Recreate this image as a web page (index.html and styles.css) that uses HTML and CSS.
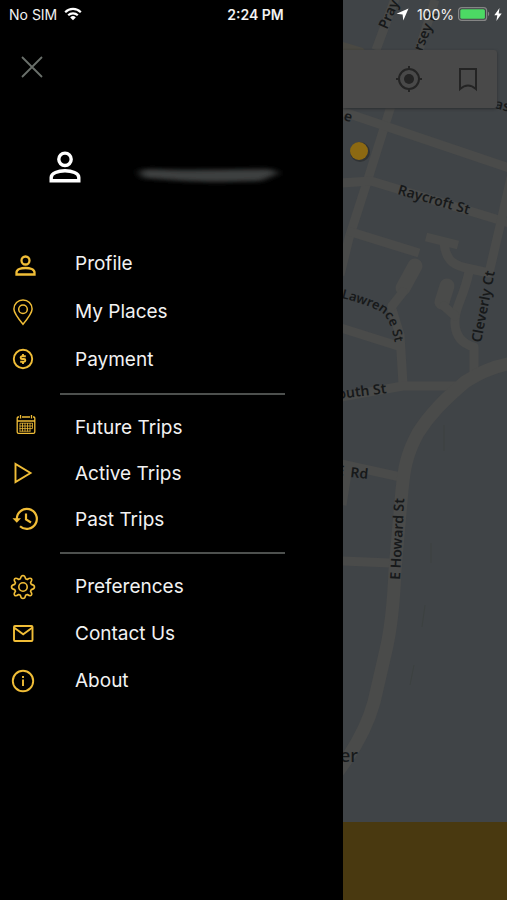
FILE: index.html
```html
<!DOCTYPE html>
<html lang="en">
<head>
<meta charset="utf-8">
<meta name="viewport" content="width=device-width, initial-scale=1">
<title>Trips menu</title>
<link rel="stylesheet" href="styles.css">
</head>
<body>
<div class="screen">
  <header class="status">
    <div class="status-side">
      <span>No SIM</span>
      <svg class="wifi" width="18" height="14" viewBox="0 0 18 14" aria-hidden="true">
        <g fill="none" stroke="#fff" stroke-width="2.2"><path d="M1.2 5.2a11 11 0 0 1 15.6 0"/><path d="M4.2 8.3a6.8 6.8 0 0 1 9.6 0"/></g>
        <path d="M9 13.2 6.2 10.4a4 4 0 0 1 5.6 0z" fill="#fff"/>
      </svg>
    </div>
    <strong class="time">2:24 PM</strong>
    <div class="status-side status-right">
      <svg width="13" height="13" viewBox="0 0 13 13" aria-hidden="true"><path d="M12.5.5 7.3 12.4 6.6 6.5.5 5.8z" fill="#fff"/></svg>
      <span>100%</span>
      <svg class="battery" width="32" height="14" viewBox="0 0 32 14" aria-hidden="true">
        <rect x=".6" y=".6" width="28" height="12.8" rx="3" fill="none" stroke="#858585" stroke-width="1.2"/>
        <rect x="2.3" y="2.3" width="24.6" height="9.4" rx="1.5" fill="#4cd964"/>
        <path d="M30 4.8v4.4c1.6-.4 1.6-4 0-4.4z" fill="#858585"/>
      </svg>
      <svg width="8" height="13" viewBox="0 0 8 13" aria-hidden="true"><path d="M5.5 0 .3 7.3h3L2.4 13l5.3-7.6h-3z" fill="#fff"/></svg>
    </div>
  </header>

  <aside class="drawer">
    <button class="close" type="button" aria-label="Close menu">
      <svg width="22" height="22" viewBox="0 0 22 22"><path d="M1 1l20 20M21 1 1 21" stroke="#6a706b" stroke-width="1.8"/></svg>
    </button>
    <div class="account">
      <svg width="32" height="32" viewBox="0 0 32 32" fill="none" stroke="#fff" stroke-width="3.4" aria-hidden="true">
        <circle cx="16" cy="8.3" r="6.2"/>
        <path d="M2.200 29.800V26.500C2.200 17.500 29.800 17.500 29.800 26.500V29.800z"/>
      </svg>
      <svg class="smudge" width="160" height="40" viewBox="0 0 160 40" aria-hidden="true">
        <defs><filter id="soft" x="-10%" y="-80%" width="120%" height="260%"><feGaussianBlur stdDeviation="4 2"/></filter></defs>
        <path d="M14 24 22 22 60 23 145 22 154 26 136 34 90 35 60 34 18 31z" fill="#3e3f3f" filter="url(#soft)"/>
      </svg>
    </div>

    <nav>
      <ul class="group group-account">
        <li><a href="#profile">
          <svg class="icon" viewBox="0 0 32 32" stroke-width="2.300"><circle cx="17.5" cy="13.500" r="4"/><path d="M8.500 27.500V25.500C8.500 19.500 26.500 19.500 26.500 25.500V27.500z"/></svg>Profile</a></li>
        <li><a href="#places">
          <svg class="icon" viewBox="0 0 32 32" stroke-width="1.5"><path d="M15 29.300C9 22 5.900 18 5.900 14a9.100 9.100 0 0 1 18.200 0C24.100 18 21 22 15 29.300z"/><circle cx="15" cy="14.200" r="4.300"/></svg>My Places</a></li>
        <li><a href="#payment">
          <svg class="icon" viewBox="0 0 32 32" stroke-width="1.900"><circle cx="15" cy="16" r="9.200"/><path d="M17.800 13.300H14a1.350 1.350 0 0 0 0 2.700h2a1.350 1.350 0 0 1 0 2.700h-3.800M15 11v2.300M15 18.700V21"/></svg>Payment</a></li>
      </ul>
      <hr>
      <ul class="group group-trips">
        <li><a href="#future">
          <svg class="icon" viewBox="0 0 32 32" stroke-width="1.300"><path d="M11 6H10.200Q9.200 6 9.200 7V21Q9.200 22.400 10.600 22.400H25.400Q26.800 22.400 26.800 21V7Q26.800 6 25.800 6H25M14 6h8M9.200 10h17.600M12.500 4v3.500M23.500 4v3.500"/><path stroke-width=".8" d="M12 12.200h12.500M11.500 15h13M11.500 17.600h13M11.500 20.200h11M12 12v8.500M14.500 12v8.500M17 12v8.500M19.500 12v8.500M22 12v8.500M24.500 12v5.600"/></svg>Future Trips</a></li>
        <li><a href="#active">
          <svg class="icon" viewBox="0 0 32 32" stroke-width="1.900"><path d="M7.500 7V25L22.500 16z"/></svg>Active Trips</a></li>
        <li><a href="#past">
          <svg class="icon" viewBox="0 0 32 32" stroke-width="2.200"><path d="M8.800 16A10 10 0 1 1 12 23.200M18 10.500V16.500L23 19.500"/><path d="M4.500 15.300H13L8.800 19.800z" fill="#f0bd37" stroke="none"/></svg>Past Trips</a></li>
      </ul>
      <hr>
      <ul class="group">
        <li><a href="#preferences">
          <svg class="icon" viewBox="0 0 32 32" stroke-width="1.600" stroke-linejoin="round"><g transform="translate(15 16)"><circle r="4.200"/><path d="M-2.600-8.300Q-2-11.500 0-11.500T2.600-8.300L4.300-7.500Q7-9.500 8.300-8.300T7.500-4.300L8.300-2.600Q11.500-2 11.500 0T8.300 2.600L7.500 4.300Q9.500 7 8.300 8.300T4.300 7.500L2.600 8.300Q2 11.500 0 11.500T-2.600 8.300L-4.300 7.500Q-7 9.500-8.300 8.300T-7.500 4.300L-8.300 2.600Q-11.500 2-11.500 0T-8.300-2.600L-7.500-4.300Q-9.500-7-8.300-8.300T-4.300-7.500z"/></g></svg>Preferences</a></li>
        <li><a href="#contact">
          <svg class="icon" viewBox="0 0 32 32" stroke-width="1.900"><rect x="6" y="8" width="18.500" height="15" rx="1"/><path d="M6 9.500 15.200 16.300 24.500 9.500"/></svg>Contact Us</a></li>
        <li><a href="#about">
          <svg class="icon" viewBox="0 0 32 32" stroke-width="1.900"><circle cx="15" cy="16" r="10.200"/><path d="M15 14.500V21M15 11v2"/></svg>About</a></li>
      </ul>
    </nav>
  </aside>

  <main class="map-pane">
    <svg class="map" viewBox="0 0 164 822" preserveAspectRatio="xMinYMin slice" role="img" aria-label="Street map">
      <rect width="164" height="822" fill="#404447"/>
      <path d="M0 42 20 48 30 60H0z" fill="#4a4943"/>
      <g fill="none" stroke="#4a4b4a" stroke-width="9" stroke-linejoin="round">
        <path d="M53-4 33 50M92 0 76 50M48 106 24 182 6 238-3 275"/>
        <path d="M-2 111 45 127 166 168M-2 183 28 181 166 223M5 231 76 253"/>
        <path d="M172 160 157 226 146 273 128 269C112 266 103 262 101 243M83 237 115 245M126 272C120 300 111 308 112 324Q113 342 131 347L131 375"/>
        <path d="M-2 328 55 346M48 306 57 335 60 384"/>
        <path d="M-2 397 60 386H116M-2 464 62 478M5 467-1 505M-2 561 47 563"/>
      </g>
      <g fill="none" stroke="#4a4b4a" stroke-linecap="round" stroke-linejoin="round">
        <path stroke-width="15" d="M72 266 60 288"/><path stroke-width="9" d="M60 292 49 306"/>
        <path stroke-width="15" d="M104 286 99 302"/><path stroke-width="9" d="M101 306 112 316"/>
        <path stroke-width="13" d="M170 363C148 367 136 373 122 382 101 400 87 414 75 433 63 455 61 470 59 490L52 570Q50 620 43 650L31 702Q22 735-4 770"/>
      </g>
      <g fill="none" stroke="#3c4140"><path d="M101 425v26M88 543v20M82 605l-3 22M71 665l-4 20"/></g>
      <g class="street">
        <text transform="translate(44 30) rotate(-66)">Pray</text>
        <text transform="translate(79 52) rotate(-68)">rsey R</text>
        <text transform="translate(0 120) rotate(15)">e</text>
        <text transform="translate(151 108) rotate(15)">as</text>
        <text transform="translate(54 194) rotate(16)">Raycroft St</text>
        <path id="lawrence" d="M-2 298Q20 303 36 311 49 317 54 356" fill="none"/>
        <text class="curved"><textPath href="#lawrence">Lawrence St</textPath></text>
        <text transform="translate(138 343) rotate(-79)">Cleverly Ct</text>
        <text transform="translate(-5 399) rotate(-7)">outh St</text>
        <text transform="translate(-7 475) rotate(6)">E</text>
        <text transform="translate(7 477) rotate(6)">Rd</text>
        <text transform="translate(57 580) rotate(-87)">E Howard St</text>
        <text class="town" x="-3" y="762">er</text>
      </g>
      <circle cx="17" cy="152" r="10" fill="#303335"/>
      <circle cx="16" cy="151" r="9" fill="#8c6912"/>
    </svg>
    <div class="toolbar">
      <button type="button" aria-label="Current location">
        <svg width="28" height="28" viewBox="0 0 28 28" fill="none" stroke="#242424" stroke-width="2"><circle cx="14" cy="14" r="10"/><circle cx="14" cy="14" r="5" fill="#242424" stroke="none"/><path d="M14 1v4M14 23v4M1 14h4M23 14h4"/></svg>
      </button>
      <button type="button" aria-label="Saved places">
        <svg width="28" height="28" viewBox="0 0 28 28" fill="none" stroke="#242424" stroke-width="2"><path d="M6 4H22V24Q14 17 6 24z"/></svg>
      </button>
    </div>
    <div class="action-bar"></div>
  </main>
</div>
</body>
</html>
```
FILE: styles.css
```css
* {
  box-sizing: border-box;
}

body {
  margin: 0;
  background: #000;
  color: #f2f2f2;
  font-family: Inter, "Liberation Sans", sans-serif;
}

button {
  padding: 0;
  border: 0;
  background: none;
}

svg {
  display: block;
}

.screen {
  position: relative;
  display: grid;
  grid-template-columns: 343fr 164fr;
  min-height: 100vh;
}

/* Status bar lies over both the drawer and the map */
.status {
  position: absolute;
  inset: 0 0 auto;
  z-index: 2;
  display: grid;
  grid-template-columns: 1fr auto 1fr;
  align-items: center;
  height: 28px;
  padding: 0 5px 0 9px;
  font-size: 14px;
}

.status-side {
  display: flex;
  align-items: center;
  gap: 7px;
}

.status-right {
  justify-content: flex-end;
  gap: 4px;
}

.status-right span {
  margin-left: 4px;
}

.time {
  font-weight: 600;
}

.drawer {
  background: #000;
  padding-top: 56px;
}

.close {
  display: block;
  margin-left: 21px;
}

.account {
  display: flex;
  align-items: center;
  gap: 44px;
  margin: 69px 0 52px 49px;
}

.smudge {
  flex: none;
}

.group {
  --row: 47px;
  margin: 0;
  padding: 0;
  list-style: none;
}

.group-account {
  --row: 48px;
}

.group-trips {
  --row: 46px;
}

.group a {
  display: flex;
  align-items: center;
  gap: 35px;
  height: var(--row);
  padding-left: 8px;
  color: inherit;
  font-size: 19px;
  text-decoration: none;
}

.icon {
  width: 32px;
  height: 32px;
  fill: none;
  stroke: #f0bd37;
}

hr {
  height: 2px;
  margin: 10px 58px 9px 60px;
  border: 0;
  background: #4d504e;
}

.map-pane {
  position: relative;
  display: flex;
  flex-direction: column;
  overflow: hidden;
}

.map {
  flex: 1 1 0;
  width: 100%;
  min-height: 0;
}

.street {
  fill: #17191a;
  font-family: "Noto Sans", "Open Sans", sans-serif;
  font-size: 14px;
  font-weight: 600;
}

.curved {
  font-size: 13px;
}

.town {
  font-size: 18px;
  font-weight: 500;
}

/* Search card tools float over the map */
.toolbar {
  position: absolute;
  top: 50px;
  right: 10px;
  left: 0;
  display: flex;
  justify-content: flex-end;
  gap: 15px;
  height: 58px;
  padding-right: 7px;
  border-radius: 0 3px 3px 0;
  background: #494949;
  box-shadow: 0 1px 3px #2b2d2f;
}

.toolbar button {
  display: grid;
  place-items: center;
  width: 44px;
}

.action-bar {
  height: 78px;
  background: #493910;
}
```
